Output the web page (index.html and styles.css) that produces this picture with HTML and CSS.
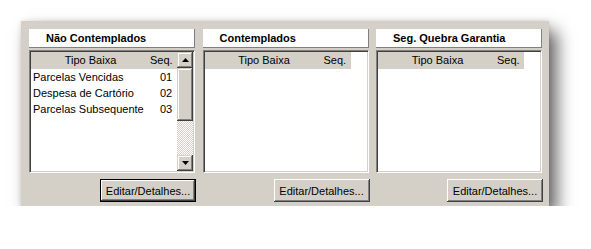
FILE: index.html
```html
<!DOCTYPE html>
<html>
<head>
<meta charset="utf-8">
<link rel="stylesheet" href="styles.css">
</head>
<body>
<div class="frame">
  <div class="col">
    <div class="title">Não Contemplados</div>
    <div class="list">
      <div class="content">
        <div class="row head"><span class="c1">Tipo Baixa</span><span class="c2">Seq.</span></div>
        <div class="row"><span class="c1 l">Parcelas Vencidas</span><span class="c2 n">01</span></div>
        <div class="row"><span class="c1 l">Despesa de Cartório</span><span class="c2 n">02</span></div>
        <div class="row"><span class="c1 l">Parcelas Subsequente</span><span class="c2 n">03</span></div>
      </div>
      <div class="sbar">
        <div class="sbtn"><svg width="7" height="4" viewBox="0 0 7 4"><path d="M3.5 0 L7 4 L0 4 Z" fill="#000"/></svg></div>
        <div class="thumb"></div>
        <div class="track"></div>
        <div class="sbtn"><svg width="7" height="4" viewBox="0 0 7 4"><path d="M0 0 L7 0 L3.5 4 Z" fill="#000"/></svg></div>
      </div>
    </div>
    <div class="btnrow"><div class="btn def"><span>Editar/Detalhes...</span></div></div>
  </div>
  <div class="col">
    <div class="title">Contemplados</div>
    <div class="list">
      <div class="content">
        <div class="row head"><span class="c1">Tipo Baixa</span><span class="c2">Seq.</span></div>
      </div>
      <div class="sbar empty"></div>
    </div>
    <div class="btnrow"><div class="btn"><span>Editar/Detalhes...</span></div></div>
  </div>
  <div class="col">
    <div class="title">Seg. Quebra Garantia</div>
    <div class="list">
      <div class="content">
        <div class="row head"><span class="c1">Tipo Baixa</span><span class="c2">Seq.</span></div>
      </div>
      <div class="sbar empty"></div>
    </div>
    <div class="btnrow"><div class="btn"><span>Editar/Detalhes...</span></div></div>
  </div>
</div>
</body>
</html>
```
FILE: styles.css
```css
html, body { margin: 0; padding: 0; background: #fff; }
body {
  font-family: "Liberation Sans", Arial, sans-serif;
  font-size: 11px;
  color: #000;
  padding: 21px 0 0 21px;
}
.frame {
  width: 528px;
  height: 185px;
  box-sizing: border-box;
  background: #d4d0c8;
  padding: 8px 0 0 8px;
  display: grid;
  grid-template-columns: 166px 166px 166px;
  column-gap: 7.5px;
  box-shadow: 8px 10px 16px rgba(0,0,0,0.6), 0 0 5px rgba(0,0,0,0.12);
}
.col { display: flex; flex-direction: column; }
.title {
  height: 19px;
  box-sizing: border-box;
  background: #fff;
  border-right: 1px solid #808080;
  border-bottom: 1px solid #808080;
  font-weight: bold;
  font-size: 11px;
  line-height: 18px;
  padding-left: 17px;
  margin-bottom: 2px;
  white-space: nowrap;
}
.list {
  height: 123px;
  box-sizing: border-box;
  background: #fff;
  border: 1px solid;
  border-color: #808080 #fff #fff #808080;
  box-shadow: inset 1px 1px 0 #404040, inset -1px -1px 0 #d4d0c8;
  padding: 1px;
  display: flex;
}
.content { width: 146px; }
.row { display: flex; height: 16px; line-height: 16px; white-space: nowrap; }
.row.head { height: 17px; line-height: 17px; background: #d4d0c8; }
.c1 { flex: 0 0 119px; min-width: 0; overflow: visible; text-align: center; box-sizing: border-box; }
.c2 { flex: 0 0 27px; min-width: 0; box-sizing: border-box; }
.c1.l { text-align: left; padding-left: 2px; }
.c2.n { padding-left: 10px; }
.sbar { width: 16px; display: flex; flex-direction: column; }
.sbar.empty { background: #fff; }
.sbtn, .thumb {
  background: #d4d0c8;
  box-shadow: inset -1px -1px 0 #404040, inset 1px 1px 0 #d4d0c8, inset -2px -2px 0 #808080, inset 2px 2px 0 #fff;
}
.sbtn { height: 16px; display: flex; align-items: center; justify-content: center; }
.sbtn svg { display: block; }
.thumb { height: 53px; }
.track {
  flex: 1;
  background-color: #fff;
  background-image:
    linear-gradient(45deg, #d4d0c8 25%, transparent 25%, transparent 75%, #d4d0c8 75%),
    linear-gradient(45deg, #d4d0c8 25%, transparent 25%, transparent 75%, #d4d0c8 75%);
  background-size: 2px 2px;
  background-position: 0 0, 1px 1px;
}
.btnrow { display: flex; justify-content: flex-end; margin-top: 6px; margin-right: -1px; }
.btn {
  width: 96px;
  height: 23px;
  box-sizing: border-box;
  background: #d4d0c8;
  display: flex;
  align-items: center;
  justify-content: center;
  white-space: nowrap;
  box-shadow: inset -1px -1px 0 #404040, inset 1px 1px 0 #fff, inset -2px -2px 0 #808080, inset 2px 2px 0 #d4d0c8;
}
.btn.def {
  border: 1px solid #000;
  box-shadow: inset -1px -1px 0 #404040, inset 1px 1px 0 #fff, inset -2px -2px 0 #808080;
}
```
